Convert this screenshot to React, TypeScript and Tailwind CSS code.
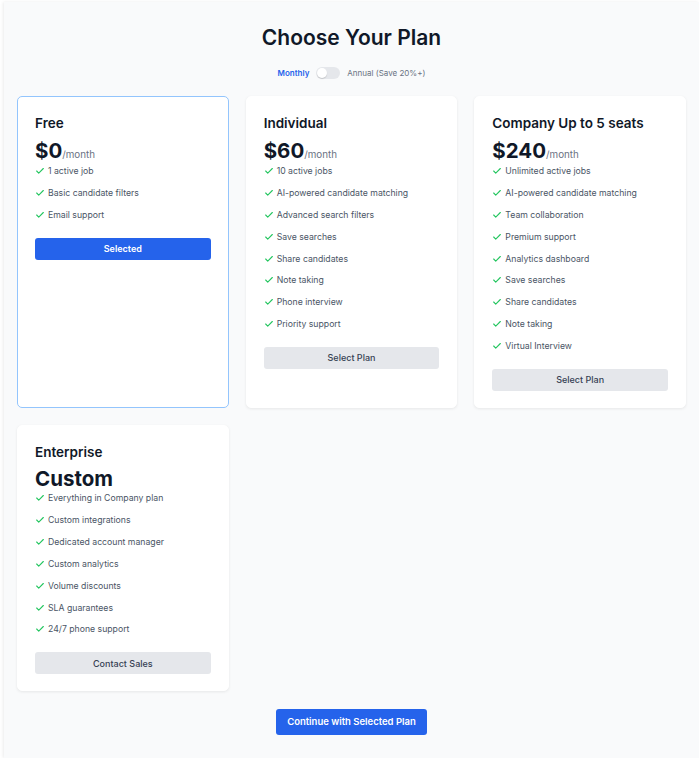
import { Check } from "lucide-react";

type Plan = {
  name: string;
  price: string;
  period?: string;
  features: string[];
  cta: string;
  selected?: boolean;
};

const PLANS: Plan[] = [
  {
    name: "Free",
    price: "$0",
    period: "/month",
    features: ["1 active job", "Basic candidate filters", "Email support"],
    cta: "Selected",
    selected: true,
  },
  {
    name: "Individual",
    price: "$60",
    period: "/month",
    features: [
      "10 active jobs",
      "AI-powered candidate matching",
      "Advanced search filters",
      "Save searches",
      "Share candidates",
      "Note taking",
      "Phone interview",
      "Priority support",
    ],
    cta: "Select Plan",
  },
  {
    name: "Company Up to 5 seats",
    price: "$240",
    period: "/month",
    features: [
      "Unlimited active jobs",
      "AI-powered candidate matching",
      "Team collaboration",
      "Premium support",
      "Analytics dashboard",
      "Save searches",
      "Share candidates",
      "Note taking",
      "Virtual Interview",
    ],
    cta: "Select Plan",
  },
  {
    name: "Enterprise",
    price: "Custom",
    features: [
      "Everything in Company plan",
      "Custom integrations",
      "Dedicated account manager",
      "Custom analytics",
      "Volume discounts",
      "SLA guarantees",
      "24/7 phone support",
    ],
    cta: "Contact Sales",
  },
];

function PlanCard({ plan }: { plan: Plan }) {
  return (
    <div
      className={`flex flex-col rounded-[5px] border bg-white px-[17px] pt-[18px] pb-[16px] ${
        plan.selected ? "border-[#93c5fd]" : "border-white shadow-[0_1px_3px_rgba(0,0,0,0.08)]"
      }`}
    >
      <h3 className="text-[13.5px] font-semibold leading-[16px] text-gray-900">{plan.name}</h3>
      <div className={`flex items-baseline leading-[19px] ${plan.period ? "mt-[10px]" : "mt-[9px] pb-[3px]"}`}>
        <span className="text-[20.5px] font-bold text-gray-900">{plan.price}</span>
        {plan.period ? <span className="text-[9.8px] text-gray-500">{plan.period}</span> : null}
      </div>
      <ul className="flex flex-col gap-[7.9px]">
        {plan.features.map((feature) => (
          <li key={feature} className="flex items-center gap-[3px] text-[8.7px] leading-[14px] text-gray-600">
            <Check className="size-[10px] shrink-0 text-[#22c55e]" strokeWidth={2.6} />
            {feature}
          </li>
        ))}
      </ul>
      <button
        className={`mt-[16px] h-[22px] w-full rounded-[3px] text-[9px] ${
          plan.selected ? "bg-[#2563eb] font-semibold text-white" : "bg-[#e5e7eb] font-medium text-gray-700"
        }`}
      >
        {plan.cta}
      </button>
    </div>
  );
}

export default function App() {
  return (
    <div className="min-h-screen bg-white font-['Inter',sans-serif]">
      <div className="ml-[4px] mt-[2px] min-h-[756px] bg-gray-50 px-[13px] pt-[22px] pb-[20px] shadow-[-1px_0_3px_rgba(0,0,0,0.08)]">
        <h1 className="text-center text-[21px] font-semibold leading-[28px] text-gray-900">Choose Your Plan</h1>
        <div className="mt-[15px] flex items-center justify-center gap-[7px] text-[8px] leading-[12px]">
          <span className="font-semibold text-[#2563eb]">Monthly</span>
          <span className="inline-flex h-[12px] w-[24px] items-center rounded-full bg-gray-200">
            <span className="ml-[1px] size-[10px] rounded-full bg-white shadow-[0_1px_1px_rgba(0,0,0,0.15)]" />
          </span>
          <span className="text-gray-500">Annual (Save 20%+)</span>
        </div>
        <div className="mt-[17px] grid grid-cols-3 gap-[17px]">
          {PLANS.map((plan) => (
            <PlanCard key={plan.name} plan={plan} />
          ))}
        </div>
        <div className="mt-[18px] flex justify-center">
          <button className="h-[26px] w-[151px] rounded-[3px] bg-[#2563eb] text-[9.5px] font-semibold text-white">
            Continue with Selected Plan
          </button>
        </div>
      </div>
    </div>
  );
}
